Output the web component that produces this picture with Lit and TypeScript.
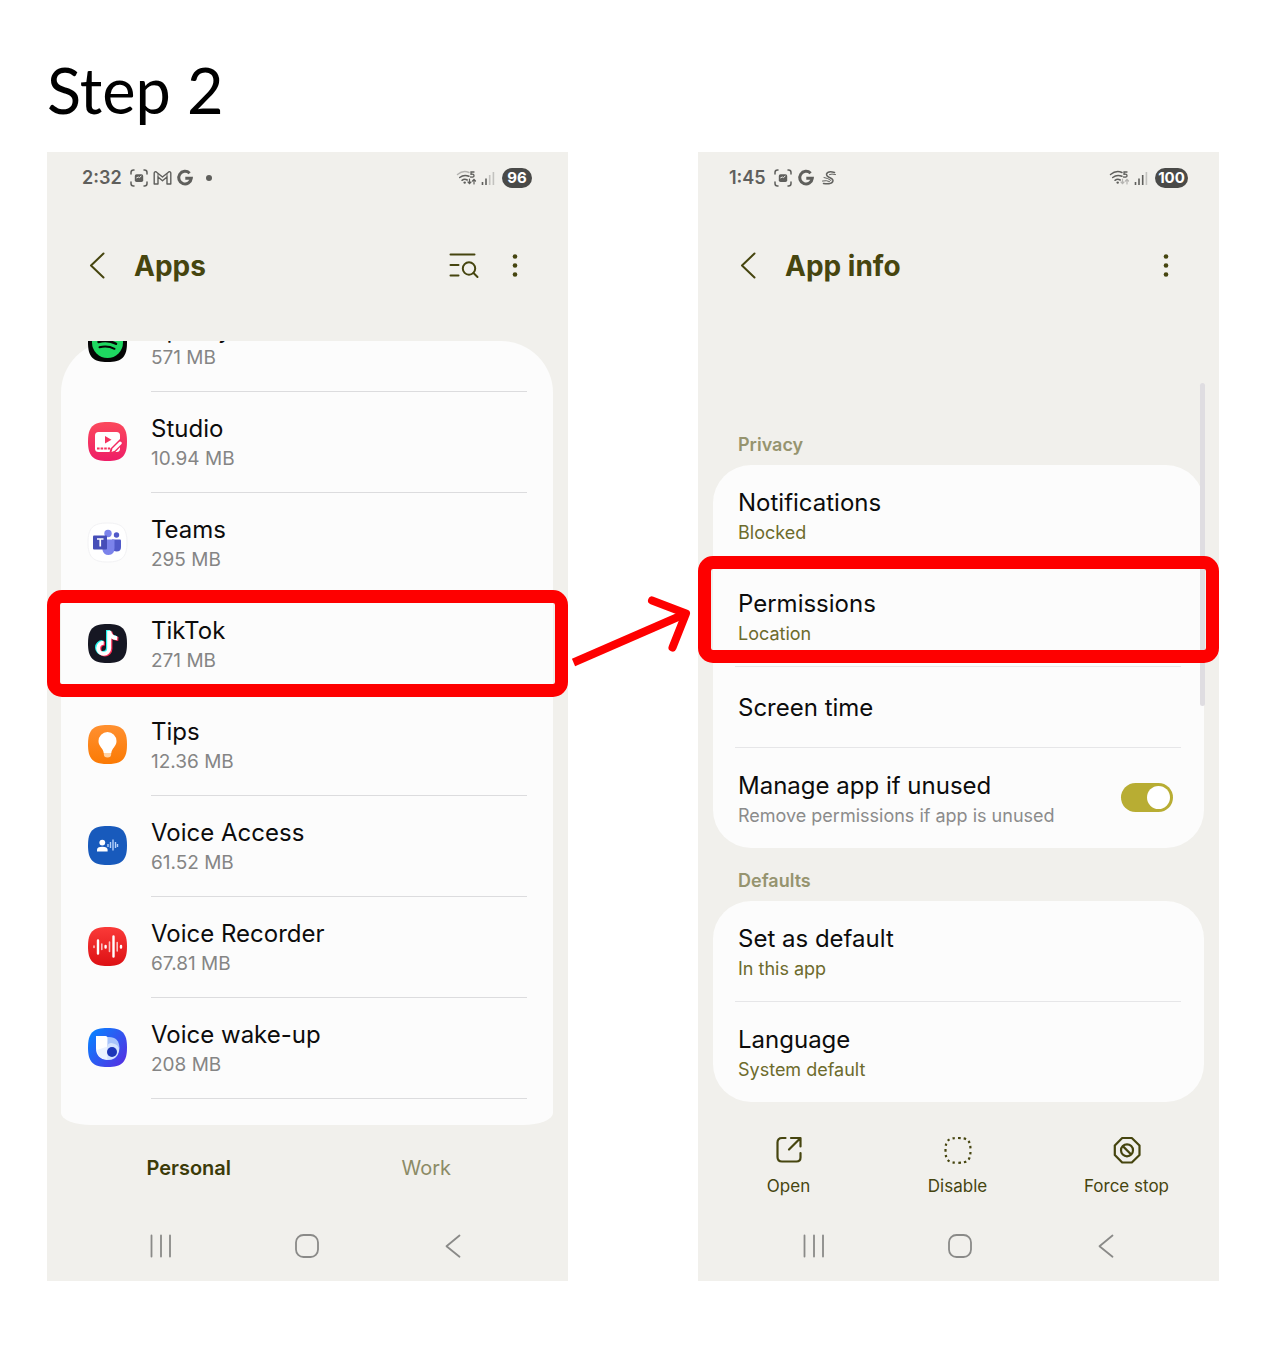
import { LitElement, html, svg, css, nothing, TemplateResult } from "lit";
import { customElement, state } from "lit/decorators.js";

const SQUIRCLE = "M19.5 0C34 0 39 5 39 19.5S34 39 19.5 39 0 34 0 19.5 5 0 19.5 0Z";

const tile = (fill: string, art: TemplateResult, defs: unknown = nothing) => html`
  <svg class="tile" viewBox="0 0 39 39" aria-hidden="true">
    ${defs}
    <path d=${SQUIRCLE} fill=${fill} />
    ${art}
  </svg>`;

const gradient = (id: string, from: string, to: string, diagonal = false) => svg`
  <defs>
    <linearGradient id=${id} x1="0" y1=${diagonal ? "0.2" : "0"} x2=${diagonal ? "1" : "0"} y2="1">
      <stop offset="0" stop-color=${from} /><stop offset="1" stop-color=${to} />
    </linearGradient>
  </defs>`;

const NOTE = "M21 6.500V24a5.500 5.500 0 1 1-5.500-5.500M21 7q1 6.500 8 7";

const icons = {
  spotify: () => tile("#050505", svg`
    <circle cx="19.5" cy="19.5" r="15.5" fill="#1ed760" />
    <g fill="none" stroke="#050505" stroke-linecap="round">
      <path d="M10 13.500c7-2 14-1.300 20 2" stroke-width="3" />
      <path d="M10.500 19c6-1.700 12.500-1 17.500 1.800" stroke-width="2.400" />
      <path d="M11.500 24.200c5-1.300 10.500-.8 15 1.600" stroke-width="2" />
    </g>`),
  studio: () => tile("url(#studio)", svg`
    <rect x="7" y="10" width="25" height="20" rx="3.500" fill="#fff" />
    <path d="M17 14v7.500l6.500-3.750Z" fill="#f5335f" />
    <path d="M9 26.500h13" stroke="#f5335f" stroke-width="1.800" stroke-dasharray="2.600 1" />
    <path d="M21 32l1.500-5.500 9.500-9.500 4 4L26.500 31Z" fill="#f32a61" />
    <path d="M23.500 30l1-3.400 6.800-6.800q1-.8 2 .2t.2 2l-6.800 6.800Z" fill="#fff" />`,
    gradient("studio", "#fb4a5c", "#ee1d67")),
  teams: () => html`
    <svg class="tile" viewBox="0 0 39 39" aria-hidden="true">
      <path d=${SQUIRCLE} fill="#fff" stroke="#f2f2f4" stroke-width="1" />
      <circle cx="28.500" cy="12" r="2.700" fill="#5059c9" />
      <circle cx="20" cy="10.500" r="3.700" fill="#7b83eb" />
      <path d="M24 16.500h8q1 0 1 1v6.500q0 4.500-4.500 4.500-3 0-4.500-2Z" fill="#5059c9" />
      <path d="M14.500 16.500h11q1 0 1 1v7.500q0 7-6 7-5 0-6-5Z" fill="#7b83eb" />
      <rect x="5" y="12.500" width="14" height="14" rx="1" fill="#464eb8" />
      <path d="M9 16h6.500M12.250 16v7.500" stroke="#fff" stroke-width="1.700" />
    </svg>`,
  tiktok: () => tile("#161723", svg`
    <g fill="none" stroke-width="4">
      <path d=${NOTE} stroke="#25f4ee" transform="translate(-1 -.4)" />
      <path d=${NOTE} stroke="#fe2c55" transform="translate(1.400 1)" />
      <path d=${NOTE} stroke="#fff" transform="translate(.2 .3)" />
    </g>`),
  tips: () => tile("url(#tips)", svg`
    <path d="M19.500 7a9 9 0 0 1 9 9c0 4-2.500 6-4 8.500-.8 1.400-1 2.400-1.200 3.500h-7.600c-.2-1.100-.4-2.100-1.200-3.500-1.500-2.500-4-4.500-4-8.500a9 9 0 0 1 9-9Z" fill="#fff" />
    <path d="M15.800 28h7.400v1q0 3.500-3.700 3.500T15.800 29Z" fill="#ffd3a6" />`,
    gradient("tips", "#ff9030", "#fb7a04")),
  access: () => tile("#185abc", svg`
    <circle cx="14.300" cy="16.600" r="2.900" fill="#fff" />
    <path d="M9 25.500v-1.700q0-3 5.300-3t5.300 3v1.700Z" fill="#fff" />
    <path d="M20 18v3M22.500 16v6M25 13.500v11M27.500 16v6M29.500 18v3" stroke="#b5d1fb" stroke-width="1.400" />`),
  recorder: () => tile("url(#recorder)", svg`
    <g stroke="#fff" stroke-linecap="round">
      <path d="M10 13.500v13M25.500 9.500v20" stroke-width="2.400" />
      <path d="M17.600 19v1.500M33 19v1.500" stroke-width="2.400" />
      <path d="M6 19v1.500M13.800 17v5.500M21.500 15v9.500M29.200 15.500v8.500" stroke-width="1.600" opacity=".7" />
    </g>`,
    gradient("recorder", "#fa3a38", "#dd1014")),
  bixby: () => tile("url(#bixby)", svg`
    <path d="M19 9q12-1 12.500 11-1 12-12 12Z" fill="#a8c4fa" />
    <path d="M8 8h9.500q2 0 2 2v22Q8 31 8 20Z" fill="#fff" />
    <path d="M19.500 18.500q0-3.500 4-3.500 8 1 7.500 8-2 9-11.500 9Q10 31 9 22Z" fill="#e3edff" opacity=".75" />
    <circle cx="24" cy="24" r="5" fill="#1c35b8" />`,
    gradient("bixby", "#0a80ff", "#5a2ae0", true)),
};

const APPS: { name: string; size: string; icon: () => TemplateResult; marked?: boolean; cut?: boolean }[] = [
  { name: "Spotify", size: "571 MB", icon: icons.spotify, cut: true },
  { name: "Studio", size: "10.94 MB", icon: icons.studio },
  { name: "Teams", size: "295 MB", icon: icons.teams },
  { name: "TikTok", size: "271 MB", icon: icons.tiktok, marked: true },
  { name: "Tips", size: "12.36 MB", icon: icons.tips },
  { name: "Voice Access", size: "61.52 MB", icon: icons.access },
  { name: "Voice Recorder", size: "67.81 MB", icon: icons.recorder },
  { name: "Voice wake-up", size: "208 MB", icon: icons.bixby },
];

const captureIcon = html`
  <svg width="20" height="20" viewBox="0 0 20 20" fill="none" stroke="#5f5f5c" stroke-width="1.500" stroke-linecap="round" aria-hidden="true">
    <path d="M2 6V4.500Q2 2 4.500 2H5M15 2h.5Q18 2 18 4.500V6M18 14v1.500q0 2.500-2.500 2.500H15M5 18h-.5Q2 18 2 15.500V14" />
    <path d="M7.500 6.200h5q1.700 0 1.700 1.700v4.400q0 1.700-1.700 1.700h-5q-1.700 0-1.700-1.700V7.900q0-1.700 1.700-1.700Z" fill="#5f5f5c" stroke="none" />
    <path d="M7.700 9.800l1.600-.8 1 .6 1.800-1.400" stroke="#f1f0ec" stroke-width="1" />
  </svg>`;

const mailIcon = html`
  <svg width="19" height="16" viewBox="0 0 19 16" fill="none" stroke="#5f5f5c" stroke-width="1.400" stroke-linejoin="round" aria-hidden="true">
    <path d="M1.200 14V3.200Q1.200 1.500 3 1.800L9.500 7l6.500-5.200q1.800-.3 1.800 1.400V14H14V7l-4.500 3.700L5 7v7Z" />
    <path d="M5 7V3.500M14 7V3.500" stroke-width="1" />
  </svg>`;

const searchEngineIcon = html`
  <svg width="18" height="18" viewBox="0 0 18 18" fill="none" stroke="#5f5f5c" stroke-width="3" aria-hidden="true">
    <path d="M13.600 4.300A6.300 6.300 0 1 0 15.300 9.300H9.300" />
  </svg>`;

const swirlIcon = html`
  <svg width="16" height="16" viewBox="0 0 16 16" fill="none" stroke="#62625f" stroke-width="1.500" stroke-linecap="round" aria-hidden="true">
    <path d="M13.500 2.500Q7 .5 5.500 4q0 2.500 4 4 3.500 1.500 2 4-2 2.500-9 1.500" />
    <path d="M14.500 4.500q-4-1-6 0M3 7.500q4 .5 7 3M1.500 11q4-1 7 .5" stroke-width="1" />
  </svg>`;

const wifiIcon = (outer: string, arrows: string) => html`
  <svg width="22" height="18" viewBox="0 0 22 18" fill="none" stroke-width="1.500" stroke-linecap="round" aria-hidden="true">
    <path d="M1.500 5.500Q7 1 13 3.500" stroke=${outer} />
    <path d="M3.700 8.500Q8 5 13 7.300" stroke="#5f5f5c" />
    <path d="M6 11.300q2.500-2 5.200-.3" stroke="#5f5f5c" />
    <circle cx="8.700" cy="13.600" r="1.200" fill="#5f5f5c" />
    <path d="M18 3h-3v2.300q3-.5 3 1.400T14.600 8" stroke="#5f5f5c" stroke-width="1.300" />
    <path d="M13.500 10v4.500M12 13l1.500 1.700L15 13M18 15v-4.500M16.500 12L18 10.300 19.500 12" stroke=${arrows} stroke-width="1.200" />
  </svg>`;

const signalIcon = (third: string) => html`
  <svg width="14" height="16" viewBox="0 0 14 16" stroke-width="1.600" aria-hidden="true">
    <path d="M1.500 15v-3M5 15V8.500" stroke="#5f5f5c" />
    <path d="M8.700 15V5" stroke=${third} />
    <path d="M12.400 15V2" stroke="#c3c2bf" />
  </svg>`;

const backIcon = html`
  <svg width="28" height="32" viewBox="0 0 28 32" fill="none" stroke="#46450f" stroke-width="2" stroke-linecap="round" stroke-linejoin="round" aria-hidden="true">
    <path d="M20.500 3.500L8 15.500l12.500 12" />
  </svg>`;

const findIcon = html`
  <svg width="32" height="32" viewBox="0 0 32 32" fill="none" stroke="#46450f" stroke-width="2" stroke-linecap="round" aria-hidden="true">
    <path d="M2.500 4.500h24M2.500 15h8M2.500 25.500h8" />
    <circle cx="21" cy="18.500" r="6.200" /><path d="M25.500 23l4 4" />
  </svg>`;

const moreIcon = html`
  <svg width="16" height="32" viewBox="0 0 16 32" fill="#46450f" aria-hidden="true">
    <circle cx="8" cy="6.500" r="2.300" /><circle cx="8" cy="15.500" r="2.300" /><circle cx="8" cy="24.500" r="2.300" />
  </svg>`;

const navBar = html`
  <nav class="nav" aria-label="System">
    <button aria-label="Recents">
      <svg width="26" height="26" viewBox="0 0 26 26" stroke="#8a8a88" stroke-width="1.800" stroke-linecap="round"><path d="M3.500 2.500v21M13 2.500v21M22 2.500v21" /></svg>
    </button>
    <button aria-label="Home">
      <svg width="26" height="26" viewBox="0 0 26 26" fill="none" stroke="#8a8a88" stroke-width="1.800"><rect x="2" y="2" width="22" height="22" rx="7.500" /></svg>
    </button>
    <button aria-label="Back">
      <svg width="26" height="26" viewBox="0 0 26 26" fill="none" stroke="#8a8a88" stroke-width="1.800" stroke-linecap="round" stroke-linejoin="round"><path d="M18.500 2.500L5.500 13.200l13 10.500" /></svg>
    </button>
  </nav>`;

const shared = css`
  * { box-sizing: border-box; }
  :host {
    display: flex;
    flex-direction: column;
    position: relative;
    background: #f1f0ec;
    font-family: Inter, "Liberation Sans", sans-serif;
    color: #0c0c0c;
  }
  button { background: none; border: 0; padding: 0; margin: 0; font: inherit; color: inherit; cursor: pointer; }
  svg { display: block; flex: none; }
  a { color: inherit; text-decoration: none; }
  .status { display: flex; align-items: center; height: 52px; color: #5f5f5c; }
  .time { font-size: 18px; line-height: 24px; font-weight: 600; }
  .status .push { margin-left: auto; }
  .pill {
    background: #4a4a48; color: #fff; border-radius: 10px; height: 20px;
    line-height: 20px; font-size: 15px; font-weight: 700; text-align: center;
    margin-left: 7px;
  }
  .header { display: flex; align-items: center; height: 124px; padding: 0 45px 0 36px; }
  .header h2 { margin: 0 auto 0 23px; font-size: 28px; line-height: 36px; font-weight: 700; color: #46450f; }
  .name { display: block; font-size: 24px; line-height: 30px; }
  .detail { display: block; font-size: 19px; line-height: 30px; color: #858585; }
  .mark {
    position: absolute; border: 13px solid #fe0000; border-radius: 15px;
    pointer-events: none; z-index: 2;
  }
  .nav { display: flex; height: 70px; padding: 0 41px; }
  .nav button { flex: 1; display: flex; align-items: center; justify-content: center; }
`;

@customElement("apps-screen")
export class AppsScreen extends LitElement {
  static styles = [shared, css`
    .status { padding: 0 36px 0 35px; }
    .capture { margin-left: 7px; }
    .mail { margin-left: 4px; }
    .engine { margin-left: 4px; }
    .dot { width: 6px; height: 6px; border-radius: 3px; background: #5f5f5c; margin-left: 12px; }
    .signal { margin-left: 3px; }
    .pill { width: 30px; }
    .find { margin-right: 27px; }
    .list {
      list-style: none; margin: 13px 15px 0 14px; padding: 0 0 26px;
      background: #fcfcfc; border-radius: 52px 52px 30px 30px / 52px 52px 12px 12px;
    }
    .item { position: relative; }
    .row { display: flex; align-items: center; gap: 24px; padding: 0 26px 0 27px; }
    .tile { width: 39px; height: 39px; overflow: visible; margin-bottom: 3px; }
    .text { flex: 1; padding: 22px 0 18px; border-bottom: 1px solid #dcdcde; }
    .cut { height: 51px; overflow: hidden; display: flex; flex-direction: column; justify-content: flex-end; }
    .cut .name { line-height: 26px; }
    .mark { inset: -4px -15px -2px -14px; }
    .tabs { display: flex; height: 86px; padding: 0 23px; font-size: 20px; line-height: 28px; }
    .tab { flex: 1; color: #8c8b66; }
    .tab.on { color: #3c3b08; font-weight: 600; }
  `];

  @state() private tab = "Personal";

  render() {
    return html`
      <div class="status">
        <span class="time">2:32</span>
        <span class="capture">${captureIcon}</span>
        <span class="mail">${mailIcon}</span>
        <span class="engine">${searchEngineIcon}</span>
        <span class="dot"></span>
        <span class="push">${wifiIcon("#b5b4b1", "#5f5f5c")}</span>
        <span class="signal">${signalIcon("#c3c2bf")}</span>
        <span class="pill">96</span>
      </div>
      <header class="header">
        <button aria-label="Back">${backIcon}</button>
        <h2>Apps</h2>
        <button class="find" aria-label="Search">${findIcon}</button>
        <button aria-label="More options">${moreIcon}</button>
      </header>
      <ul class="list">
        ${APPS.map((app) => html`
          <li class="item ${app.cut ? "cut" : ""}">
            <a class="row" href="#">
              ${app.icon()}
              <span class="text">
                <span class="name">${app.name}</span>
                <span class="detail">${app.size}</span>
              </span>
            </a>
            ${app.marked ? html`<div class="mark"></div>` : nothing}
          </li>`)}
      </ul>
      <div class="tabs">
        ${["Personal", "Work"].map((t) => html`
          <button class="tab ${t === this.tab ? "on" : ""}" @click=${() => (this.tab = t)}>${t}</button>`)}
      </div>
      ${navBar}`;
  }
}

@customElement("info-screen")
export class InfoScreen extends LitElement {
  static styles = [shared, css`
    .status { padding: 0 31px; }
    .capture { margin-left: 7px; }
    .engine { margin-left: 4px; }
    .swirl { margin-left: 6px; }
    .signal { margin-left: 3px; }
    .pill { width: 33px; }
    .content { padding: 0 15px; margin-top: 105px; }
    .label { margin: 0 0 8px; padding-left: 25px; font-size: 18px; line-height: 24px; font-weight: 600; color: #96946f; }
    .card { background: #fcfcfc; border-radius: 38px; padding: 0 23px 0 22px; margin-bottom: 21px; }
    .card.last { margin-bottom: 0; }
    .row {
      display: flex; align-items: center; position: relative;
      padding: 23px 8px 17px 3px; border-bottom: 1px solid #e6e6e8;
    }
    .row.single { padding: 26px 8px 24px 3px; }
    .row.end { border-bottom: 0; }
    .words { flex: 1; }
    .detail { font-size: 18px; color: #6d6b2c; }
    .detail.quiet { color: #8b8b8b; }
    .mark { inset: -10px -38px 3px -37px; }
    .switch {
      appearance: none; margin: 0 0 7px; width: 52px; height: 29px; border-radius: 15px;
      background: #b8ad33; padding: 3px; display: flex; cursor: pointer;
    }
    .switch::before { content: ""; width: 23px; height: 23px; border-radius: 12px; background: #fff; }
    .switch:checked { justify-content: flex-end; }
    .bar {
      position: absolute; top: 231px; right: 14px; width: 5px; height: 323px;
      border-radius: 3px; background: #dfdde1; z-index: 1;
    }
    .actions { display: flex; padding: 34px 8px 13px 6px; color: #46450f; }
    .action { flex: 1; display: flex; flex-direction: column; align-items: center; gap: 10px; font-size: 17px; line-height: 24px; }
    .nav { padding: 0 39px 0 43px; }
  `];

  private link(name: string, detail: string, marked = false, end = false) {
    return html`
      <a class="row ${end ? "end" : ""}" href="#">
        <span class="words">
          <span class="name">${name}</span>
          <span class="detail">${detail}</span>
        </span>
        ${marked ? html`<span class="mark"></span>` : nothing}
      </a>`;
  }

  render() {
    return html`
      <div class="status">
        <span class="time">1:45</span>
        <span class="capture">${captureIcon}</span>
        <span class="engine">${searchEngineIcon}</span>
        <span class="swirl">${swirlIcon}</span>
        <span class="push">${wifiIcon("#5f5f5c", "#b5b4b1")}</span>
        <span class="signal">${signalIcon("#5f5f5c")}</span>
        <span class="pill">100</span>
      </div>
      <header class="header">
        <button aria-label="Back">${backIcon}</button>
        <h2>App info</h2>
        <button aria-label="More options">${moreIcon}</button>
      </header>
      <div class="bar"></div>
      <main class="content">
        <h3 class="label">Privacy</h3>
        <section class="card">
          ${this.link("Notifications", "Blocked")}
          ${this.link("Permissions", "Location", true)}
          <a class="row single" href="#"><span class="name">Screen time</span></a>
          <div class="row end">
            <label class="words" for="manage">
              <span class="name">Manage app if unused</span>
              <span class="detail quiet">Remove permissions if app is unused</span>
            </label>
            <input class="switch" id="manage" type="checkbox" checked />
          </div>
        </section>
        <h3 class="label">Defaults</h3>
        <section class="card last">
          ${this.link("Set as default", "In this app")}
          ${this.link("Language", "System default", false, true)}
        </section>
      </main>
      <div class="actions">
        <button class="action">
          <svg width="28" height="28" viewBox="0 0 28 28" fill="none" stroke="#46450f" stroke-width="2.200" stroke-linecap="round" stroke-linejoin="round" aria-hidden="true">
            <path d="M10.500 2H7Q2.500 2 2.500 6.500V21q0 4.500 4.500 4.500h14.500q4 0 4-4V17M16 2h9.500v8.500M25 2.500L14 13.500" />
          </svg>
          Open
        </button>
        <button class="action">
          <svg width="28" height="28" viewBox="0 0 28 28" fill="none" stroke="#46450f" stroke-width="2.200" stroke-dasharray="2.400 3.180" aria-hidden="true">
            <path d="M14 2C24 2 26.500 4.500 26.500 14.300S24 26.800 14 26.800 1.500 24 1.500 14.300 4 2 14 2Z" />
          </svg>
          Disable
        </button>
        <button class="action">
          <svg width="28" height="28" viewBox="0 0 28 28" fill="none" stroke="#46450f" stroke-width="2.200" stroke-linejoin="round" aria-hidden="true">
            <path d="M9.200 2h9.600L26.500 9.500v9.500L18.800 26.500H9.200L1.800 19V9.500Z" />
            <circle cx="14" cy="14.300" r="6" /><path d="M9.800 10.100l8.400 8.400" />
          </svg>
          Force stop
        </button>
      </div>
      ${navBar}`;
  }
}

@customElement("app-root")
export class AppRoot extends LitElement {
  static styles = css`
    :host {
      display: block;
      background: #fff;
      padding: 52px 47px 90px;
      font-family: Inter, "Liberation Sans", sans-serif;
    }
    .title {
      margin: 0 0 24px; font-family: Lato, "Liberation Sans", sans-serif;
      font-size: 63px; line-height: 76px; font-weight: 400; color: #000;
    }
    .steps { display: grid; grid-template-columns: minmax(0, 1fr) 130px minmax(0, 1fr); align-items: start; }
    .arrow { display: block; margin-top: 438px; }
  `;

  render() {
    return html`
      <h1 class="title">Step 2</h1>
      <div class="steps">
        <apps-screen></apps-screen>
        <svg class="arrow" width="130" height="80" viewBox="0 0 130 80" fill="none" stroke="#fe0000" stroke-width="8" aria-hidden="true">
          <path d="M5.500 72.500L118 23.500" />
          <path d="M84 10.500L118 23.500 104.500 57.500" stroke-linecap="round" stroke-linejoin="round" />
        </svg>
        <info-screen></info-screen>
      </div>`;
  }
}
